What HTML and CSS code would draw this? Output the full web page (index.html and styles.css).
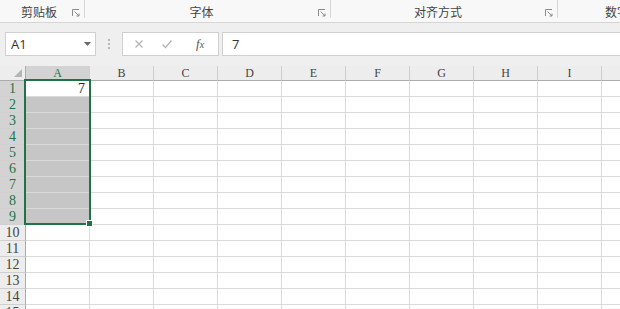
FILE: index.html
```html
<!DOCTYPE html>
<html lang="zh-CN">
<head>
  <meta charset="UTF-8">
  <title>Sheet1</title>
  <link rel="stylesheet" href="styles.css">
</head>
<body>
  <!-- Ribbon group labels -->
  <div class="ribbon">
    <div class="group g-clip"><span class="label">剪贴板</span><svg class="launcher" viewBox="0 0 8 8"><path d="M0.5 7V0.5H7" fill="none" stroke="#8a8a8a"/><path d="M2.5 2.5L7 7M7 4.5V7H4.5" fill="none" stroke="#8a8a8a"/></svg></div>
    <div class="group g-font"><span class="label">字体</span><svg class="launcher" viewBox="0 0 8 8"><path d="M0.5 7V0.5H7" fill="none" stroke="#8a8a8a"/><path d="M2.5 2.5L7 7M7 4.5V7H4.5" fill="none" stroke="#8a8a8a"/></svg></div>
    <div class="group g-align"><span class="label">对齐方式</span><svg class="launcher" viewBox="0 0 8 8"><path d="M0.5 7V0.5H7" fill="none" stroke="#8a8a8a"/><path d="M2.5 2.5L7 7M7 4.5V7H4.5" fill="none" stroke="#8a8a8a"/></svg></div>
    <div class="group g-num"><span class="label">数字</span></div>
  </div>

  <!-- Formula bar -->
  <div class="formula-row">
    <div class="name-box">
      <span>A1</span>
      <svg class="caret" viewBox="0 0 7 4"><path d="M0 0H7L3.5 4Z" fill="#6a6a6a"/></svg>
    </div>
    <div class="grip"><i></i><i></i><i></i></div>
    <div class="fx-box">
      <svg class="fx-icon" viewBox="0 0 10 10"><path d="M1.5 1.5L8.5 8.5M8.5 1.5L1.5 8.5" stroke="#b4b4b4" stroke-width="1.2"/></svg>
      <svg class="fx-icon" viewBox="0 0 12 10"><path d="M1.5 5.5L4.5 8.5L10.5 1.5" fill="none" stroke="#b4b4b4" stroke-width="1.3"/></svg>
      <span class="fx">f<small>x</small></span>
    </div>
    <div class="formula-input">7</div>
  </div>

  <!-- Sheet grid -->
  <div class="sheet">
    <div class="grid" id="grid"></div>
    <div class="selection"></div>
    <div class="fill-handle"></div>
  </div>

  <script>
    const cols = ["A", "B", "C", "D", "E", "F", "G", "H", "I", "J"];
    const rowCount = 15;
    const grid = document.getElementById("grid");

    function cell(cls, text) {
      const el = document.createElement("div");
      el.className = cls;
      if (text !== undefined) el.textContent = text;
      grid.appendChild(el);
    }

    // header row
    cell("corner");
    cols.forEach((c, i) => cell(i === 0 ? "col-head active" : "col-head", c));

    // body rows
    for (let r = 1; r <= rowCount; r++) {
      cell(r <= 9 ? "row-head active" : "row-head", r);
      cols.forEach((c, i) => {
        if (i === 0 && r === 1) cell("cell num", "7");
        else if (i === 0 && r <= 9) cell("cell picked");
        else cell("cell");
      });
    }
  </script>
</body>
</html>
```

FILE: styles.css
```css
body {
  margin: 0;
  width: 620px;
  height: 309px;
  overflow: hidden;
  background: #fff;
  font-family: "Noto Sans CJK SC", "Noto Sans", sans-serif;
}

/* Ribbon labels */
.ribbon {
  display: flex;
  height: 22px;
  background: #f8f8f8;
  border-bottom: 1px solid #d6d6d6;
  white-space: nowrap;
  overflow: hidden;
}

.group {
  display: flex;
  flex-shrink: 0;
  align-items: center;
  box-sizing: border-box;
  padding-right: 4px;
  border-right: 1px solid #d6d6d6;
  margin: 0 0 4px;
}

.group .label {
  flex: 1;
  text-align: center;
  font-size: 12px;
  color: #444;
  padding-top: 4px;
}

.launcher {
  width: 8px;
  height: 8px;
  margin-top: 8px;
}

.g-clip { width: 85px; }
.g-clip .label { padding-left: 6px; }
.g-font { width: 246px; }
.g-align { width: 227px; }
.g-num { width: 80px; border-right: none; }
.g-num .label { text-align: left; padding-left: 47px; }

/* Formula bar */
.formula-row {
  display: flex;
  align-items: center;
  height: 43px;
  background: #efefef;
  padding-left: 5px;
  box-sizing: border-box;
  padding-bottom: 2px;
}

.name-box {
  display: flex;
  align-items: center;
  justify-content: space-between;
  box-sizing: border-box;
  width: 91px;
  height: 24px;
  background: #fff;
  border: 1px solid #d0d0d0;
  padding: 0 4px 0 5px;
  font-family: "Open Sans", "Noto Sans", sans-serif;
  font-size: 13px;
  color: #333;
}

.caret {
  width: 7px;
  height: 4px;
}

.grip {
  width: 26px;
  display: flex;
  flex-direction: column;
  align-items: center;
  gap: 2px;
}

.grip i {
  width: 2px;
  height: 2px;
  background: #b8b8b8;
}

.fx-box {
  display: flex;
  align-items: center;
  box-sizing: border-box;
  width: 97px;
  height: 24px;
  background: #fff;
  border: 1px solid #d0d0d0;
  padding: 0 8px 0 11px;
}

.fx-icon {
  width: 10px;
  height: 10px;
  margin-right: 17px;
}

.fx-icon + .fx-icon {
  width: 12px;
  margin-right: 23px;
}

.fx {
  font-family: "Liberation Serif", serif;
  font-style: italic;
  font-size: 13px;
  color: #555;
}

.fx small {
  font-size: 10px;
}

.formula-input {
  flex: 1;
  box-sizing: border-box;
  height: 24px;
  margin-left: 3px;
  background: #fff;
  border: 1px solid #d0d0d0;
  border-right: none;
  padding: 0 0 0 9px;
  line-height: 22px;
  font-family: "Open Sans", "Noto Sans", sans-serif;
  font-size: 13px;
  color: #333;
}

/* Sheet */
.sheet {
  position: relative;
}

.grid {
  display: grid;
  grid-template-columns: 26px repeat(10, 64px);
  grid-template-rows: 15px;
  grid-auto-rows: 16px;
  font-family: "Liberation Serif", serif;
}

.grid > div {
  box-sizing: border-box;
  border-right: 1px solid #dadada;
  border-bottom: 1px solid #dadada;
}

.corner,
.col-head {
  background: #ededed;
  border-bottom-color: #ababab !important;
}

.corner {
  position: relative;
  border-right-color: #ababab !important;
}

.corner::after {
  content: "";
  position: absolute;
  right: 3px;
  bottom: 3px;
  border-style: solid;
  border-width: 0 0 8px 8px;
  border-color: transparent transparent #b5b5b5 transparent;
}

.col-head {
  text-align: center;
  font-size: 12px;
  line-height: 15px;
  color: #444;
  border-right-color: #d0d0d0 !important;
}

.col-head.active {
  background: #d3d3d3;
  color: #217346;
  border-bottom: 2px solid #217346 !important;
  line-height: 14px;
}

.row-head {
  background: #ededed;
  text-align: center;
  font-size: 14px;
  line-height: 15px;
  color: #444;
  border-right-color: #ababab !important;
  border-bottom-color: #d0d0d0 !important;
}

.row-head.active {
  background: #d3d3d3;
  color: #217346;
}

.cell.num {
  text-align: right;
  padding-right: 4px;
  font-size: 14px;
  line-height: 15px;
  color: #222;
}

.cell.picked {
  background: #c6c6c6;
}

.selection {
  position: absolute;
  left: 24px;
  top: 13px;
  width: 67px;
  height: 146px;
  box-sizing: border-box;
  border: 2px solid #217346;
  pointer-events: none;
}

.fill-handle {
  position: absolute;
  left: 86px;
  top: 154px;
  width: 5px;
  height: 5px;
  background: #217346;
  border: 1px solid #fff;
}
```
